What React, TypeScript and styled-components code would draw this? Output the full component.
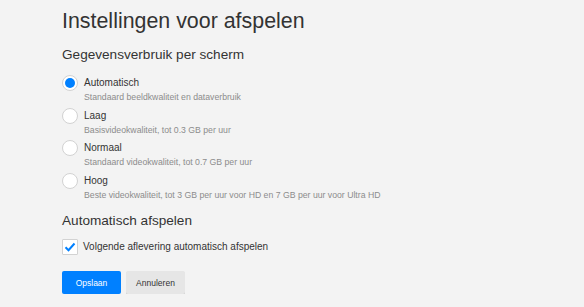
import styled, { createGlobalStyle } from 'styled-components';

const GlobalStyle = createGlobalStyle`
  html, body {
    margin: 0;
    padding: 0;
    background: #f3f3f3;
  }
  body {
    font-family: "Liberation Sans", Arial, sans-serif;
    color: #333;
  }
`;

const options = [
  { label: 'Automatisch', desc: 'Standaard beeldkwaliteit en dataverbruik', checked: true },
  { label: 'Laag', desc: 'Basisvideokwaliteit, tot 0.3 GB per uur', checked: false },
  { label: 'Normaal', desc: 'Standaard videokwaliteit, tot 0.7 GB per uur', checked: false },
  {
    label: 'Hoog',
    desc: 'Beste videokwaliteit, tot 3 GB per uur voor HD en 7 GB per uur voor Ultra HD',
    checked: false,
  },
];

const App = () => {
  return (
    <>
      <GlobalStyle />
      <StyledPage>
        <Title>Instellingen voor afspelen</Title>
        <SectionTitle>Gegevensverbruik per scherm</SectionTitle>
        <OptionList>
          {options.map((o) => (
            <Option key={o.label}>
              <Radio $checked={o.checked} />
              <OptionLabel>{o.label}</OptionLabel>
              <OptionDesc>{o.desc}</OptionDesc>
            </Option>
          ))}
        </OptionList>
        <SectionTitle $top={11}>Automatisch afspelen</SectionTitle>
        <CheckRow>
          <Checkbox>
            <svg width="12" height="10" viewBox="0 0 12 10">
              <path d="M1.5 5.2 L4.5 8.2 L10.5 1.5" fill="none" stroke="#0080ff" strokeWidth="2" />
            </svg>
          </Checkbox>
          <CheckLabel>Volgende aflevering automatisch afspelen</CheckLabel>
        </CheckRow>
        <Buttons>
          <Button $primary>Opslaan</Button>
          <Button>Annuleren</Button>
        </Buttons>
      </StyledPage>
    </>
  );
};

const StyledPage = styled.div`
  padding: 8px 0 0 62px;
`;

const Title = styled.h1`
  margin: 0;
  font-size: 21.4px;
  line-height: 26px;
  font-weight: 400;
  color: #333;
`;

const SectionTitle = styled.h2<{ $top?: number }>`
  margin: ${(p) => p.$top ?? 12}px 0 0;
  font-size: 13.6px;
  line-height: 18px;
  font-weight: 400;
  color: #333;
`;

const OptionList = styled.div`
  display: flex;
  flex-direction: column;
  gap: 4.7px;
  margin-top: 11px;
`;

const Option = styled.div`
  display: grid;
  grid-template-columns: 16px 1fr;
  column-gap: 6px;
`;

const Radio = styled.span<{ $checked: boolean }>`
  box-sizing: border-box;
  width: 16px;
  height: 16px;
  border-radius: 50%;
  border: 1px solid #d2d2d2;
  background: #fff;
  display: flex;
  align-items: center;
  justify-content: center;

  &::after {
    content: '';
    display: ${(p) => (p.$checked ? 'block' : 'none')};
    width: 10px;
    height: 10px;
    border-radius: 50%;
    background: #0080ff;
  }
`;

const OptionLabel = styled.span`
  font-size: 10px;
  line-height: 16px;
  color: #333;
`;

const OptionDesc = styled.span`
  grid-column: 2;
  font-size: 8.7px;
  line-height: 12px;
  color: #8c8c8c;
`;

const CheckRow = styled.div`
  display: flex;
  align-items: center;
  gap: 5px;
  margin-top: 9px;
`;

const Checkbox = styled.span`
  box-sizing: border-box;
  width: 16px;
  height: 16px;
  border: 1px solid #d2d2d2;
  border-radius: 1px;
  background: #fff;
  display: flex;
  align-items: center;
  justify-content: center;
`;

const CheckLabel = styled.span`
  font-size: 10px;
  line-height: 16px;
  color: #333;
`;

const Buttons = styled.div`
  display: flex;
  gap: 5px;
  margin-top: 16px;
`;

const Button = styled.button<{ $primary?: boolean }>`
  box-sizing: border-box;
  width: 59px;
  height: 23px;
  padding: 0;
  font-family: "Liberation Sans", Arial, sans-serif;
  font-size: 8.5px;
  border-radius: 2px;
  border: none;
  background: ${(p) => (p.$primary ? '#0080ff' : '#e6e6e6')};
  box-shadow: ${(p) => (p.$primary ? 'none' : '0 1px 0 rgba(0, 0, 0, 0.15)')};
  color: ${(p) => (p.$primary ? '#fff' : '#333')};
`;

export default App;
